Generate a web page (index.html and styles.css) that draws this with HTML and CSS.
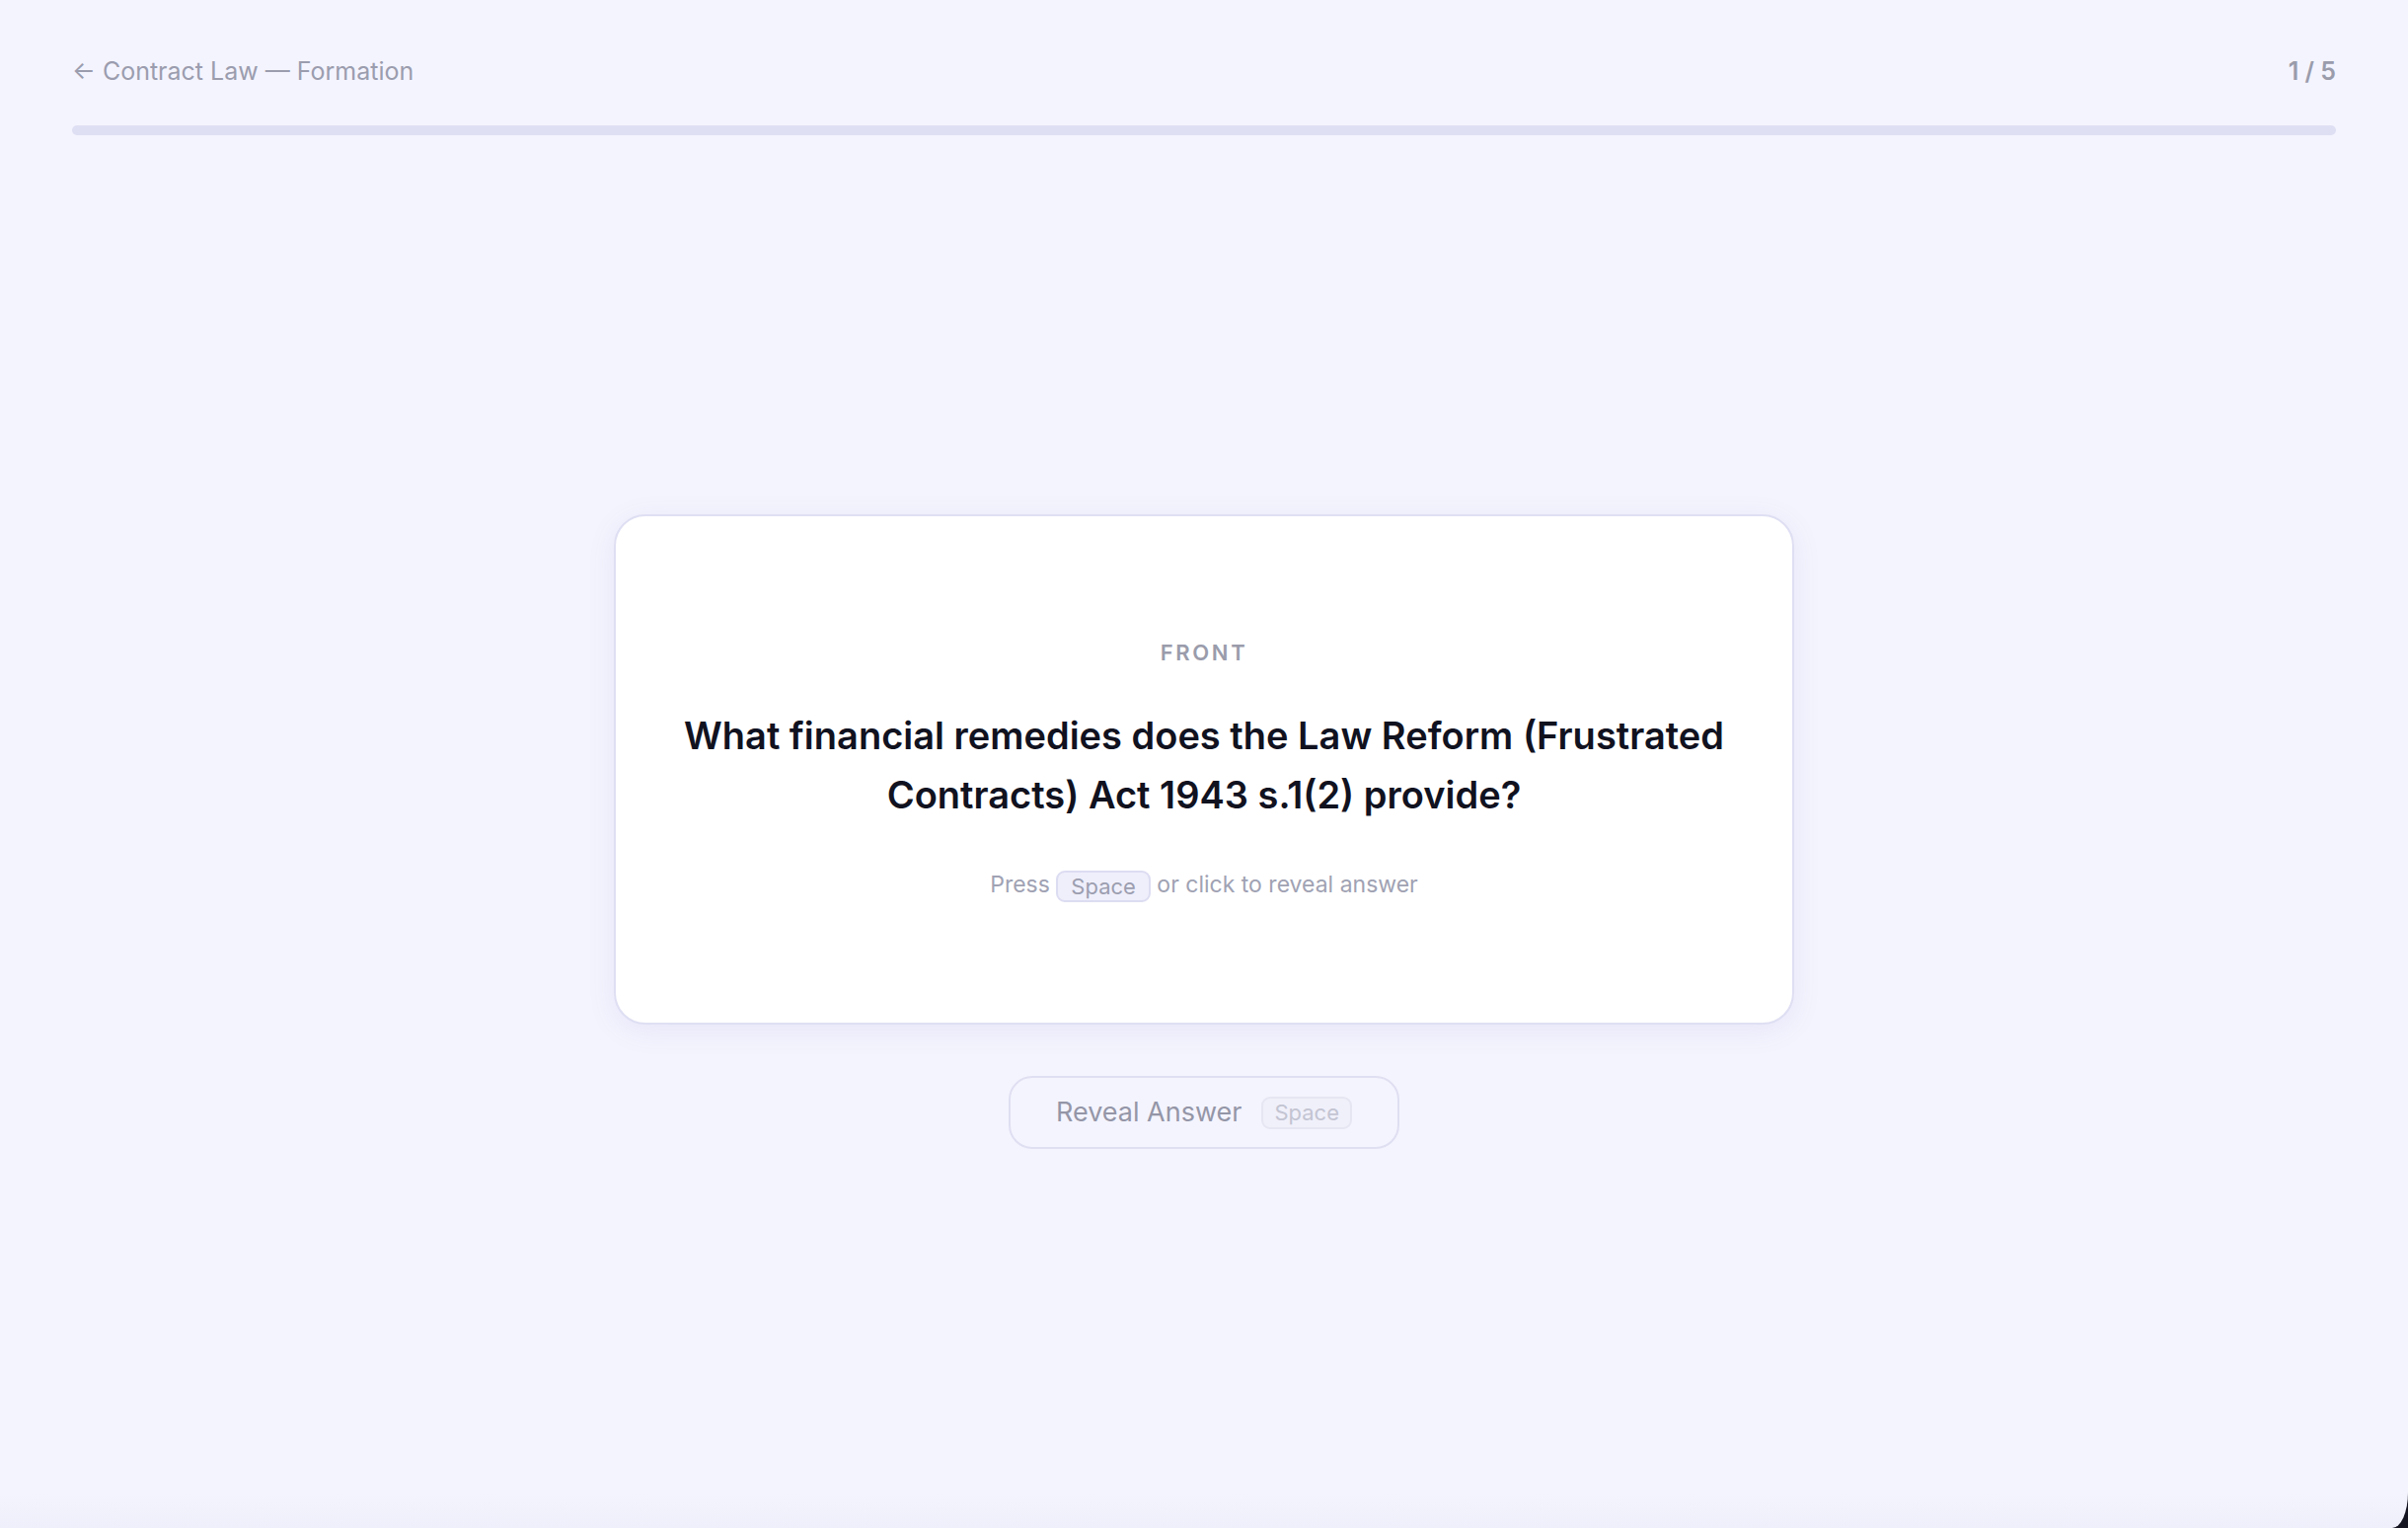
FILE: index.html
```html
<!DOCTYPE html>
<html lang="en">
<head>
<meta charset="utf-8">
<title>Flashcards — Contract Law</title>
<link rel="stylesheet" href="styles.css">
</head>
<body>
<div class="app">
  <header class="topbar">
    <a class="back" href="#">← Contract Law — Formation</a>
    <span class="counter">1 / 5</span>
  </header>
  <div class="progress"><div class="progress-fill" style="width:0%"></div></div>
  <main class="stage">
    <section class="card">
      <div class="side-label">FRONT</div>
      <h1 class="question">What financial remedies does the Law Reform (Frustrated Contracts) Act 1943 s.1(2) provide?</h1>
      <p class="hint">Press <kbd class="key">Space</kbd> or click to reveal answer</p>
    </section>
    <button class="reveal" type="button">Reveal Answer <kbd class="key key-faint">Space</kbd></button>
  </main>
</div>
</body>
</html>
```
FILE: styles.css
```css
* { box-sizing: border-box; }
html {
  background: #13141f;
  height: 100%;
}
body {
  margin: 0;
  height: 100vh;
  font-family: Inter, "Noto Sans", "Liberation Sans", sans-serif;
  background: linear-gradient(to bottom, #f4f4fe 0, #f4f4fe calc(100% - 34px), #efeffb 100%);
  border-bottom-right-radius: 16px 36px;
  overflow: hidden;
}
.app {
  height: 100%;
  display: flex;
  flex-direction: column;
  padding: 52px 73px 0 73px;
}
.topbar {
  display: flex;
  justify-content: space-between;
  align-items: center;
  height: 40px;
  font-size: 25px;
  line-height: 40px;
}
.back {
  color: #9b9dae;
  text-decoration: none;
}
.counter {
  color: #9a9cab;
  font-weight: 600;
}
.progress {
  margin-top: 35px;
  height: 10px;
  border-radius: 5px;
  background: #dfdff4;
  overflow: hidden;
}
.progress-fill {
  height: 100%;
  background: #8b8ff0;
}
.stage {
  flex: 1;
  display: flex;
  flex-direction: column;
  align-items: center;
  justify-content: center;
  gap: 52px;
}
.card {
  width: 1196px;
  background: #ffffff;
  border: 2px solid #dfdff3;
  border-radius: 32px;
  box-shadow: 0 6px 28px rgba(110, 110, 200, 0.10);
  padding: 122px 56px;
  text-align: center;
}
.side-label {
  font-size: 22px;
  line-height: 32px;
  font-weight: 600;
  letter-spacing: 0.12em;
  color: #9a9cab;
}
.question {
  margin: 38px 0 0 0;
  font-size: 38px;
  line-height: 60px;
  font-weight: 600;
  color: #11121f;
}
.hint {
  margin: 43px 0 0 0;
  font-size: 23px;
  line-height: 36px;
  color: #a0a2b3;
}
.key {
  display: inline-block;
  font-family: Inter, "Noto Sans", "Liberation Sans", sans-serif;
  font-size: 22px;
  line-height: 28px;
  padding: 0 13px;
  border: 2px solid #dcdcf2;
  border-radius: 9px;
  background: #efeffb;
  color: #9c9eb0;
  vertical-align: middle;
}
.reveal {
  display: flex;
  align-items: center;
  gap: 20px;
  padding: 17px 46px;
  border: 2px solid #dfdff2;
  border-radius: 24px;
  background: transparent;
  font-family: Inter, "Noto Sans", "Liberation Sans", sans-serif;
  font-size: 27px;
  line-height: 36px;
  color: #9496a7;
  cursor: pointer;
}
.key-faint {
  background: #f0f0fa;
  border-color: #e6e6f3;
  color: #c3c4d2;
  line-height: 29px;
  padding: 0 11px;
}
```
